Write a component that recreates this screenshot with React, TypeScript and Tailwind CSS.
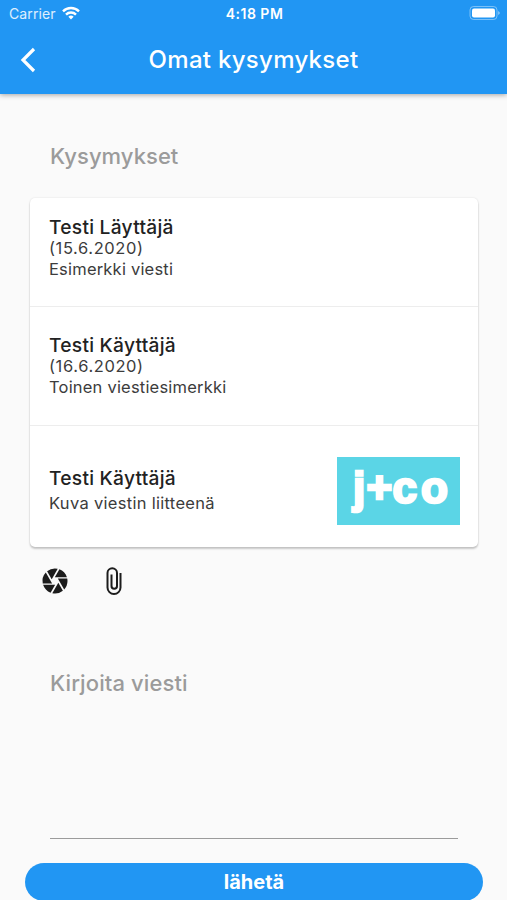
import React from 'react';
import { MdCamera } from 'react-icons/md';
import clsx from 'clsx';

interface Message {
  author: string;
  date?: string;
  text: string;
  attachment?: boolean;
}

const messages: Message[] = [
  { author: 'Testi Läyttäjä', date: '(15.6.2020)', text: 'Esimerkki viesti' },
  { author: 'Testi Käyttäjä', date: '(16.6.2020)', text: 'Toinen viestiesimerkki' },
  { author: 'Testi Käyttäjä', text: 'Kuva viestin liitteenä', attachment: true },
];

const StatusBar: React.FC = () => (
  <div className="grid h-7 grid-cols-3 items-center pl-[9px] pr-[7px] leading-none">
    <div className="flex items-center gap-1.5 pb-0.5">
      <span className="pt-0.5 text-[14px] tracking-[0.1px] text-white/85">Carrier</span>
      <svg viewBox="0 0 18 14" className="h-3.5 w-[18px]" fill="none" stroke="white" strokeWidth="2.4">
        <path d="M1 5.3a11.4 11.4 0 0 1 16 0" />
        <path d="M4 8.6a7.1 7.1 0 0 1 10 0" />
        <path d="M6.4 10.8a3.7 3.7 0 0 1 5.2 0L9 13.6z" fill="white" stroke="none" />
      </svg>
    </div>
    <span className="whitespace-nowrap text-center text-[14px] font-semibold tracking-[0.5px]">4:18 PM</span>
    <svg viewBox="0 0 31 14" className="mb-0.5 h-3.5 w-[31px] justify-self-end" fill="white">
      <rect x="1" y="0.5" width="27" height="13" rx="3.5" fill="none" stroke="white" strokeOpacity="0.4" />
      <rect x="3" y="2.5" width="23" height="9" rx="2" />
      <path d="M29.2 5v4q1.6-.8 1.6-2t-1.6-2z" fillOpacity="0.5" />
    </svg>
  </div>
);

const JcoLogo: React.FC = () => (
  <svg
    viewBox="0 0 123 68"
    className="h-[68px] w-[123px] shrink-0 bg-[#5bd5e6] font-['Liberation_Sans',sans-serif] font-bold"
    fill="white"
    stroke="white"
    strokeWidth="2.6"
    fontSize="44"
  >
    <text y="45.5" x="16 29.5 55.5 84">
      j+co
    </text>
  </svg>
);

const PaperclipIcon: React.FC = () => (
  <svg viewBox="0 0 30 30" className="size-[30px]" fill="none" stroke="currentColor" strokeWidth="2">
    <path d="M22.5 7v14.5a6.5 6.5 0 0 1-13 0V7a4.75 4.75 0 0 1 9.5 0v13a2.75 2.75 0 0 1-5.5 0V8.5" />
  </svg>
);

const MessageRow: React.FC<{ message: Message }> = ({ message }) => (
  <div
    className={clsx(
      'flex border-b border-[#ededed] pl-[19px] pr-[18px] first:h-[109px] first:pt-[18px] last:border-b-0',
      message.attachment ? 'h-[122px] items-center justify-between pt-2' : 'h-[118.5px] pt-[27px]',
    )}
  >
    <div className="text-[16.5px] leading-[21px] tracking-[0.2px] text-[#3c3c3c]">
      <h2
        className={clsx(
          'text-[19.2px] font-medium tracking-[0.25px] text-[#222]',
          message.attachment ? 'leading-[26px]' : 'leading-[22px]',
        )}
      >
        {message.author}
      </h2>
      {message.date && <p className="tracking-[0.6px]">{message.date}</p>}
      <p className={clsx(message.attachment && 'leading-[25px] tracking-[0.3px]')}>{message.text}</p>
    </div>
    {message.attachment && <JcoLogo />}
  </div>
);

export default function App() {
  return (
    <div className="flex h-[900px] w-[507px] flex-col overflow-hidden bg-[#fafafa] font-[Inter,sans-serif]">
      <header className="h-[94px] shrink-0 bg-[#2196f3] text-white shadow-[0_1px_5px_rgba(0,0,0,0.35)]">
        <StatusBar />
        <div className="grid h-[64px] grid-cols-[60px_1fr_60px] items-center">
          <button aria-label="Takaisin" className="pl-5">
            <svg viewBox="0 0 16 26" className="h-[26px] w-4" fill="none" stroke="white" strokeWidth="3.2">
              <path d="M14 2 3 13l11 11" />
            </svg>
          </button>
          <h1 className="text-center text-[24px] font-medium tracking-[0.3px]">Omat kysymykset</h1>
        </div>
      </header>

      <main className="flex grow flex-col">
        <p className="ml-[50px] mt-[46px] text-[22px] font-[450] leading-8 tracking-[0.05px] text-[#9b9b9b]">
          Kysymykset
        </p>
        <section className="ml-[30px] mt-[26px] h-[349px] w-[448px] shrink-0 rounded-[5px] bg-white shadow-[0_2px_2px_rgba(0,0,0,0.2),0_0_2px_rgba(0,0,0,0.12)]">
          {messages.map((message, i) => (
            <MessageRow key={i} message={message} />
          ))}
        </section>

        <div className="ml-10 mt-[19px] flex gap-[28px] text-[#1c1c1c]">
          <button aria-label="Ota kuva">
            <MdCamera className="size-[30px]" />
          </button>
          <button aria-label="Lisää liite">
            <PaperclipIcon />
          </button>
        </div>

        <div className="ml-[50px] mt-[71px] h-[172px] w-[408px] border-b border-[#9b9b9b]">
          <p className="text-[22px] font-[450] leading-8 tracking-[0.1px] text-[#9b9b9b]">Kirjoita viesti</p>
        </div>
        <button className="ml-[25px] mt-6 h-[38px] w-[458px] shrink-0 rounded-full bg-[#2196f3] text-[20px] font-bold text-white">
          lähetä
        </button>
      </main>
    </div>
  );
}
